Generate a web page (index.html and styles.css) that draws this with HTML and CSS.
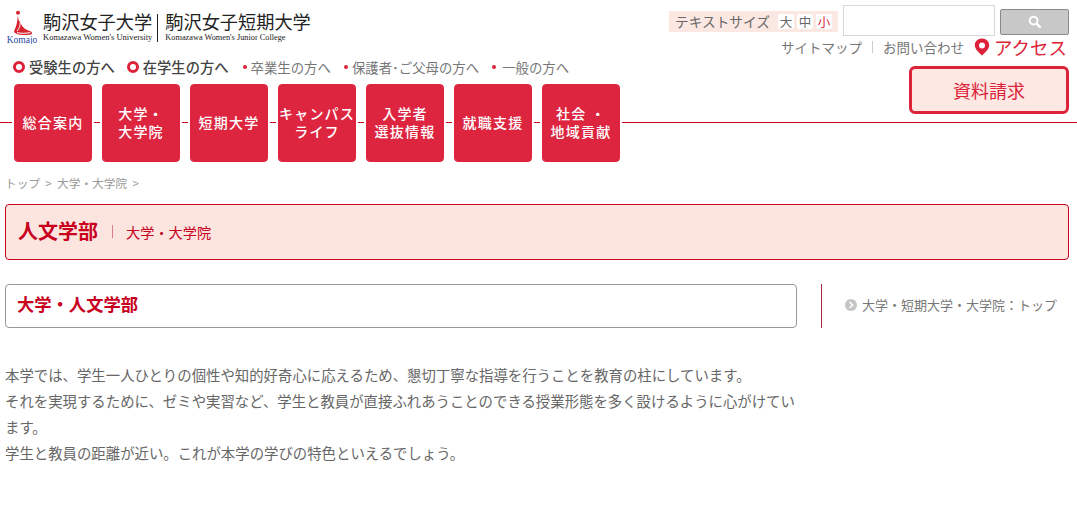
FILE: index.html
```html
<!DOCTYPE html>
<html lang="ja">
<head>
    <meta charset="UTF-8">
    <meta name="viewport" content="width=device-width, initial-scale=1.0">
    <title>大学・人文学部</title>
    <link rel="stylesheet" href="styles.css">
</head>
<body>
    <header class="header">
        <div class="header-left">
            <a class="logo" href="#">
                <span class="logo-mark">
                    <svg width="30" height="25" viewBox="0 0 30 25">
                        <circle cx="11" cy="2.8" r="2" fill="#d9232e"/>
                        <path d="M11 5 C11 9 12 11 14 14 C16 18 19 20 24 21.5 C25.8 22.5 25.2 24.6 23 24.8 C17 25.4 11 25 8 23 C6.5 22 7 21 8 19 C10 15 10.5 9 11 5 Z" fill="#d9232e"/>
                        <path d="M10 21 C12 19 13.4 16 13 13 M10 22.6 C14 23.6 19 23.4 23.4 22.6" fill="none" stroke="#fff" stroke-width="1"/>
                    </svg>
                    <span class="logo-komajo">Komajo</span>
                </span>
                <span class="logo-name">
                    <span class="logo-ja">駒沢女子大学</span>
                    <span class="logo-en">Komazawa Women's University</span>
                </span>
                <span class="logo-name logo-name-second">
                    <span class="logo-ja">駒沢女子短期大学</span>
                    <span class="logo-en">Komazawa Women's Junior College</span>
                </span>
            </a>
            <ul class="target-links">
                <li class="target-main">受験生の方へ</li>
                <li class="target-main">在学生の方へ</li>
                <li class="target-sub">卒業生の方へ</li>
                <li class="target-sub">保護者･ご父母の方へ</li>
                <li class="target-sub">一般の方へ</li>
            </ul>
        </div>
        <div class="header-right">
            <div class="tools">
                <div class="text-size">
                    <span class="text-size-label">テキストサイズ</span>
                    <span class="text-size-btn">大</span>
                    <span class="text-size-btn">中</span>
                    <span class="text-size-btn active">小</span>
                </div>
                <form class="search">
                    <input class="search-input" type="text">
                    <button class="search-btn" type="button">
                        <svg width="14" height="14" viewBox="0 0 14 14">
                            <circle cx="5.6" cy="5.6" r="3.9" fill="none" stroke="#fff" stroke-width="2"/>
                            <path d="M8.6 8.6 L12.6 12.6" stroke="#fff" stroke-width="2.4"/>
                        </svg>
                    </button>
                </form>
            </div>
            <div class="sub-links">
                <a href="#">サイトマップ</a>
                <span class="sep"></span>
                <a href="#">お問い合わせ</a>
                <a class="access" href="#">
                    <svg width="16" height="18" viewBox="0 0 16 18">
                        <path d="M8 0.5 C3.8 0.5 0.8 3.5 0.8 7.2 C0.8 11 5 14.5 8 17.5 C11 14.5 15.2 11 15.2 7.2 C15.2 3.5 12.2 0.5 8 0.5 Z M8 4.4 A3 3 0 1 1 8 10.4 A3 3 0 1 1 8 4.4 Z" fill="#dc2339" fill-rule="evenodd"/>
                    </svg>
                    アクセス
                </a>
            </div>
            <a class="request-btn" href="#">資料請求</a>
        </div>
    </header>

    <nav class="gnav">
        <a href="#">総合案内</a>
        <a href="#">大学・<br>大学院</a>
        <a href="#">短期大学</a>
        <a href="#">キャンパス<br>ライフ</a>
        <a href="#">入学者<br>選抜情報</a>
        <a href="#">就職支援</a>
        <a href="#">社会 ・<br>地域貢献</a>
    </nav>

    <div class="breadcrumb">トップ &nbsp;&gt; &nbsp;大学・大学院 &nbsp;&gt;</div>

    <div class="page-title">
        <h1>人文学部</h1>
        <span class="page-title-sep"></span>
        <span class="page-title-sub">大学・大学院</span>
    </div>

    <div class="content-head">
        <h2>大学・人文学部</h2>
        <div class="side-link">
            <span class="side-arrow">
                <svg width="12" height="12" viewBox="0 0 12 12">
                    <circle cx="6" cy="6" r="6" fill="#c4c4c4"/>
                    <path d="M4.6 3 L7.6 6 L4.6 9" fill="none" stroke="#fff" stroke-width="1.6"/>
                </svg>
            </span>
            大学・短期大学・大学院：トップ
        </div>
    </div>

    <p class="lead">
        本学では、学生一人ひとりの個性や知的好奇心に応えるため、懇切丁寧な指導を行うことを教育の柱にしています。<br>
        それを実現するために、ゼミや実習など、学生と教員が直接ふれあうことのできる授業形態を多く設けるように心がけています。<br>
        学生と教員の距離が近い。これが本学の学びの特色といえるでしょう。
    </p>
</body>
</html>
```

FILE: styles.css
```css
*, *::before, *::after {
    box-sizing: border-box;
}
html, body {
    overflow: hidden;
}
body {
    margin: 0;
    font-family: "Noto Sans CJK JP", "Noto Sans", sans-serif;
    color: #666;
    background-color: #fff;
}
a {
    color: inherit;
    text-decoration: none;
}

/* header */
.header {
    display: flex;
    justify-content: space-between;
    height: 84px;
}
.header-left {
    padding: 10px 0 0 7px;
}
.logo {
    display: flex;
    height: 34px;
}
.logo-mark {
    display: flex;
    flex-direction: column;
    align-items: center;
    width: 30px;
    margin-right: 6px;
    overflow: hidden;
}
.logo-mark svg {
    flex: none;
}
.logo-komajo {
    font-family: "Liberation Serif", serif;
    font-size: 9.5px;
    line-height: 10px;
    color: #1f4aa0;
}
.logo-name {
    display: flex;
    flex-direction: column;
    color: #222;
}
.logo-name-second {
    height: 28px;
    margin: 4px 0 0 5px;
    padding-left: 7px;
    border-left: 1px solid #222;
}
.logo-name-second .logo-ja {
    margin-top: -4px;
}
.logo-name-second .logo-en {
    font-size: 8.3px;
}
.logo-ja {
    font-weight: 400;
    font-size: 18.2px;
    line-height: 23px;
    white-space: nowrap;
}
.logo-en {
    font-family: "Liberation Serif", serif;
    font-size: 8.5px;
    line-height: 9px;
    white-space: nowrap;
}
.target-links {
    display: flex;
    align-items: center;
    list-style: none;
    margin: 14px 0 0 6px;
    padding: 0;
    line-height: 18px;
    white-space: nowrap;
}
.target-main {
    display: flex;
    align-items: center;
    font-size: 14.3px;
    font-weight: 500;
    color: #444;
    margin-right: 14px;
}
.target-main:first-child {
    margin-right: 12px;
}
.target-main::before {
    content: "";
    width: 12px;
    height: 12px;
    margin-right: 4px;
    border: 3px solid #dc2339;
    border-radius: 50%;
}
.target-sub {
    display: flex;
    align-items: center;
    font-size: 13.4px;
    color: #777;
    margin-right: 13px;
}
.target-sub::before {
    content: "";
    width: 4px;
    height: 4px;
    margin-right: 4px;
    border-radius: 50%;
    background-color: #dc2339;
}
.target-sub:last-child::before {
    margin-right: 6px;
}

.header-right {
    position: relative;
    z-index: 1;
    display: flex;
    flex-direction: column;
    align-items: flex-end;
    padding: 5px 8px 0 0;
}
.tools {
    display: flex;
    align-items: flex-start;
}
.text-size {
    display: flex;
    align-items: center;
    height: 21px;
    margin-top: 6px;
    padding: 0 6px;
    background-color: #fce8e2;
    font-size: 13.7px;
    line-height: 19px;
    color: #666;
}
.text-size-label {
    margin-right: 8px;
}
.text-size-btn {
    width: 16px;
    height: 15px;
    margin-left: 3px;
    border-radius: 2px;
    background-color: #fff;
    font-size: 12.5px;
    line-height: 15px;
    text-align: center;
}
.text-size-label + .text-size-btn {
    margin-left: 0;
}
.active {
    color: #dc2339;
}
.search {
    display: flex;
    margin: 0;
}
.search-input {
    width: 152px;
    height: 31px;
    margin: 0 5px;
    border: 1px solid #d8d8d8;
    background-color: #fff;
}
.search-btn {
    display: flex;
    align-items: center;
    justify-content: center;
    width: 69px;
    height: 26px;
    margin-top: 4px;
    padding: 0;
    border: 1px solid #8a8a8a;
    border-radius: 2px;
    background-color: #c8c8c8;
}
.sub-links {
    display: flex;
    align-items: center;
    height: 24px;
    margin-top: -1px;
    font-size: 13.5px;
    color: #777;
}
.sep {
    width: 1px;
    height: 12px;
    margin: 0 10px;
    background-color: #ccc;
}
.access {
    display: flex;
    align-items: center;
    margin: 0 2px 0 10px;
    font-size: 18.5px;
    color: #dc2339;
}
.access svg {
    margin-right: 4px;
}
.request-btn {
    width: 160px;
    height: 48px;
    margin-top: 7px;
    border: 3px solid #dc2339;
    border-radius: 6px;
    background-color: #fde8e3;
    color: #dc2339;
    font-size: 18px;
    line-height: 42px;
    text-align: center;
}

/* global nav, the red line runs behind the buttons */
.gnav {
    display: flex;
    gap: 10px;
    height: 78px;
    padding-left: 14px;
    background: linear-gradient(#d0021b, #d0021b) 0 38px / 100% 1px no-repeat;
}
.gnav a {
    display: flex;
    align-items: center;
    justify-content: center;
    width: 78px;
    padding-bottom: 3px;
    border-radius: 4px;
    outline: 2px solid #fff;
    background-color: #dd2540;
    color: #fff;
    font-size: 14px;
    font-weight: 500;
    line-height: 18px;
    letter-spacing: 1.2px;
    text-align: center;
    white-space: nowrap;
}

.breadcrumb {
    margin: 11px 0 0 5px;
    font-size: 11.7px;
    line-height: 20px;
    color: #999;
}

.page-title {
    display: flex;
    align-items: center;
    height: 56px;
    margin: 11px 8px 0 5px;
    padding: 0 0 4px 12px;
    border: 1px solid #c8001e;
    border-radius: 4px;
    background-color: #fce4df;
    color: #c8001e;
}
.page-title h1 {
    margin: 0;
    font-size: 20px;
    font-weight: 700;
}
.page-title-sep {
    width: 1px;
    height: 13px;
    margin: 3px 13px 0 14px;
    background-color: #d87a90;
}
.page-title-sub {
    margin-top: 3px;
    font-size: 14.2px;
}

.content-head {
    display: flex;
    align-items: stretch;
    margin: 24px 0 0 5px;
}
.content-head h2 {
    width: 792px;
    height: 44px;
    margin: 0;
    padding-left: 11px;
    border: 1px solid #999;
    border-radius: 4px;
    color: #c8001e;
    font-size: 17.3px;
    font-weight: 700;
    line-height: 37px;
}
.side-link {
    display: flex;
    align-items: center;
    margin-left: 24px;
    padding: 0 0 3px 23px;
    border-left: 1px solid #a8283c;
    font-size: 13px;
    color: #777;
    white-space: nowrap;
}
.side-arrow {
    display: flex;
    margin-right: 5px;
}

.lead {
    width: 793px;
    margin: 34px 0 0 5px;
    font-size: 14.4px;
    line-height: 26px;
    color: #666;
}
```
